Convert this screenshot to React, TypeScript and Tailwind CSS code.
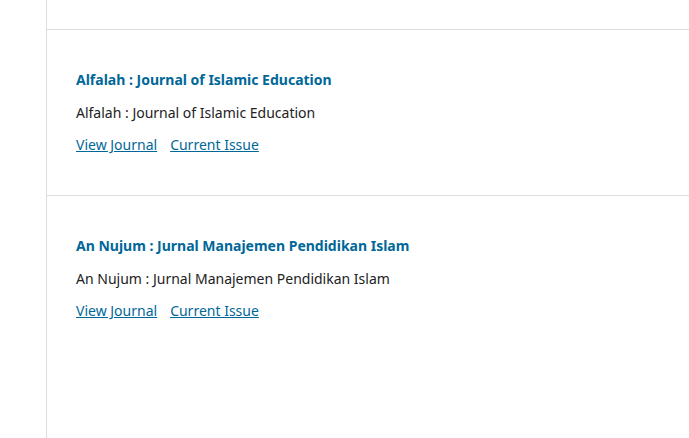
const journals = [
  {
    title: 'Alfalah : Journal of Islamic Education',
    description: 'Alfalah : Journal of Islamic Education',
  },
  {
    title: 'An Nujum : Jurnal Manajemen Pendidikan Islam',
    description: 'An Nujum : Jurnal Manajemen Pendidikan Islam',
  },
];

export default function App() {
  return (
    <div className="min-h-[438px] bg-white text-[14px] text-[#222]" style={{ fontFamily: '"Noto Sans", sans-serif' }}>
      <div className="ml-[46px] min-h-[438px] border-l border-[#ddd]">
        <div className="h-[29px]" />
        <ul>
          {journals.map((journal) => (
            <li key={journal.title} className="border-t border-[#ddd] pl-[29px] pr-[28px] pt-[40px] pb-[40px]">
              <h3 className="text-[14px] font-bold leading-[20px]">
                <a href="#" className="text-[#006798] no-underline">
                  {journal.title}
                </a>
              </h3>
              <p className="mt-[13px] leading-[20px]">{journal.description}</p>
              <div className="mt-[12px] flex gap-[13px] leading-[20px]">
                <a href="#" className="text-[#006798] underline">
                  View Journal
                </a>
                <a href="#" className="text-[#006798] underline">
                  Current Issue
                </a>
              </div>
            </li>
          ))}
        </ul>
      </div>
    </div>
  );
}
